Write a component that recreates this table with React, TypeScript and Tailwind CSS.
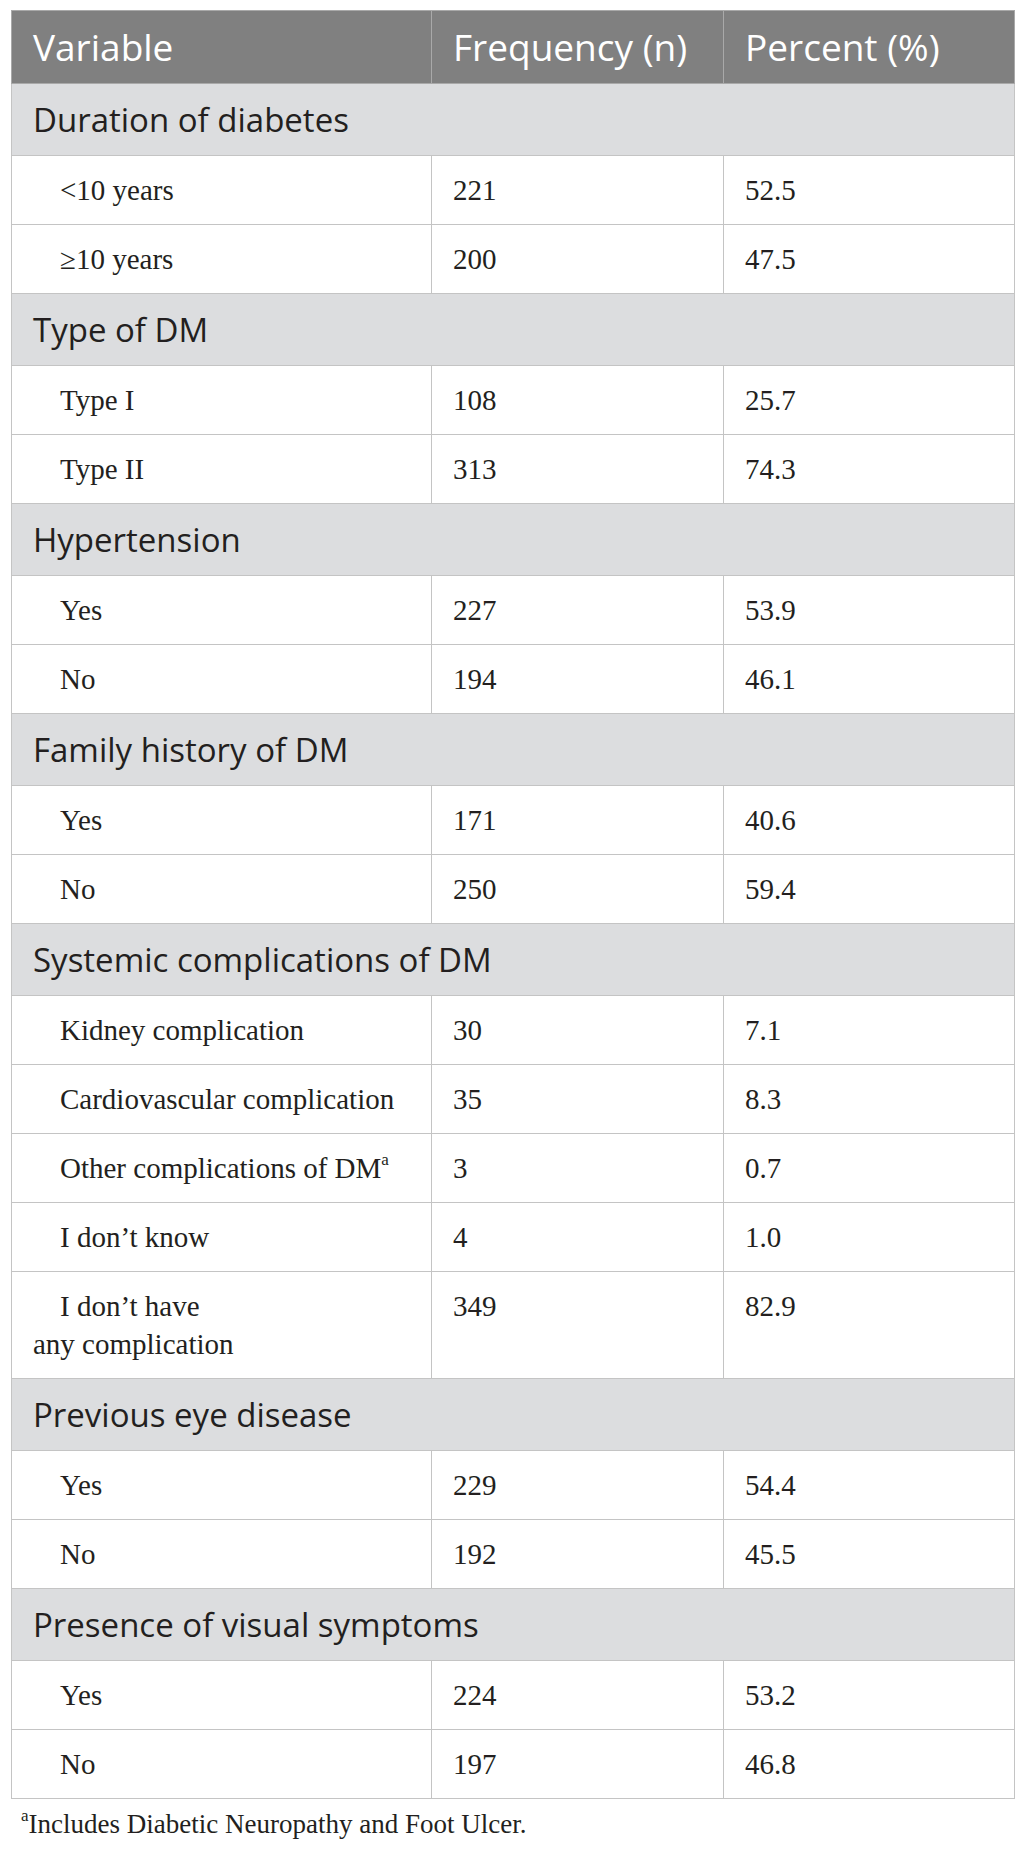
import React from "react";

type Row = { label: string; n: string; pct: string; sup?: boolean; wrap?: string };
type Section = { title: string; rows: Row[] };

const sections: Section[] = [
  {
    title: "Duration of diabetes",
    rows: [
      { label: "<10 years", n: "221", pct: "52.5" },
      { label: "≥10 years", n: "200", pct: "47.5" },
    ],
  },
  {
    title: "Type of DM",
    rows: [
      { label: "Type I", n: "108", pct: "25.7" },
      { label: "Type II", n: "313", pct: "74.3" },
    ],
  },
  {
    title: "Hypertension",
    rows: [
      { label: "Yes", n: "227", pct: "53.9" },
      { label: "No", n: "194", pct: "46.1" },
    ],
  },
  {
    title: "Family history of DM",
    rows: [
      { label: "Yes", n: "171", pct: "40.6" },
      { label: "No", n: "250", pct: "59.4" },
    ],
  },
  {
    title: "Systemic complications of DM",
    rows: [
      { label: "Kidney complication", n: "30", pct: "7.1" },
      { label: "Cardiovascular complication", n: "35", pct: "8.3" },
      { label: "Other complications of DM", n: "3", pct: "0.7", sup: true },
      { label: "I don’t know", n: "4", pct: "1.0" },
      { label: "I don’t have", wrap: "any complication", n: "349", pct: "82.9" },
    ],
  },
  {
    title: "Previous eye disease",
    rows: [
      { label: "Yes", n: "229", pct: "54.4" },
      { label: "No", n: "192", pct: "45.5" },
    ],
  },
  {
    title: "Presence of visual symptoms",
    rows: [
      { label: "Yes", n: "224", pct: "53.2" },
      { label: "No", n: "197", pct: "46.8" },
    ],
  },
];

const sans = "font-['Open_Sans','Lato',sans-serif]";
const serif = "font-['Liberation_Serif','Times_New_Roman',serif]";

export default function App() {
  return (
    <div className="w-[1025px] bg-white pt-[10px] pl-[11px] text-[#231f20]">
      <table className="w-[1003px] table-fixed border-collapse">
        <colgroup>
          <col className="w-[420px]" />
          <col className="w-[292px]" />
          <col className="w-[291px]" />
        </colgroup>
        <thead>
          <tr className={`h-[73px] bg-[#808080] text-white text-[37px] ${sans}`}>
            <th className="border border-[#a9a9a9] px-[21px] text-left font-normal">Variable</th>
            <th className="border border-[#a9a9a9] px-[21px] text-left font-normal">Frequency (n)</th>
            <th className="border border-[#a9a9a9] px-[21px] text-left font-normal">Percent (%)</th>
          </tr>
        </thead>
        <tbody>
          {sections.map((s) => (
            <React.Fragment key={s.title}>
              <tr className={`h-[72px] bg-[#dcdddf] text-[33px] ${sans}`}>
                <td colSpan={3} className="border border-[#c4c4c4] px-[21px]">
                  {s.title}
                </td>
              </tr>
              {s.rows.map((r) => (
                <tr key={s.title + r.label} className={`text-[29px] leading-[38px] ${serif}`}>
                  <td className="border border-[#c4c4c4] px-[21px] py-[15px] align-top">
                    <div className="indent-[27px]">
                      {r.label}
                      {r.sup && <sup className="text-[17px] -top-[0.75em]">a</sup>}
                      {r.wrap && (
                        <>
                          <br />
                          {r.wrap}
                        </>
                      )}
                    </div>
                  </td>
                  <td className="border border-[#c4c4c4] px-[21px] py-[15px] align-top">{r.n}</td>
                  <td className="border border-[#c4c4c4] px-[21px] py-[15px] align-top">{r.pct}</td>
                </tr>
              ))}
            </React.Fragment>
          ))}
        </tbody>
      </table>
      <p className={`mt-[6px] pl-[10px] text-[27px] leading-[38px] ${serif}`}>
        <sup className="text-[17px] -top-[0.7em]">a</sup>Includes Diabetic Neuropathy and Foot Ulcer.
      </p>
    </div>
  );
}
